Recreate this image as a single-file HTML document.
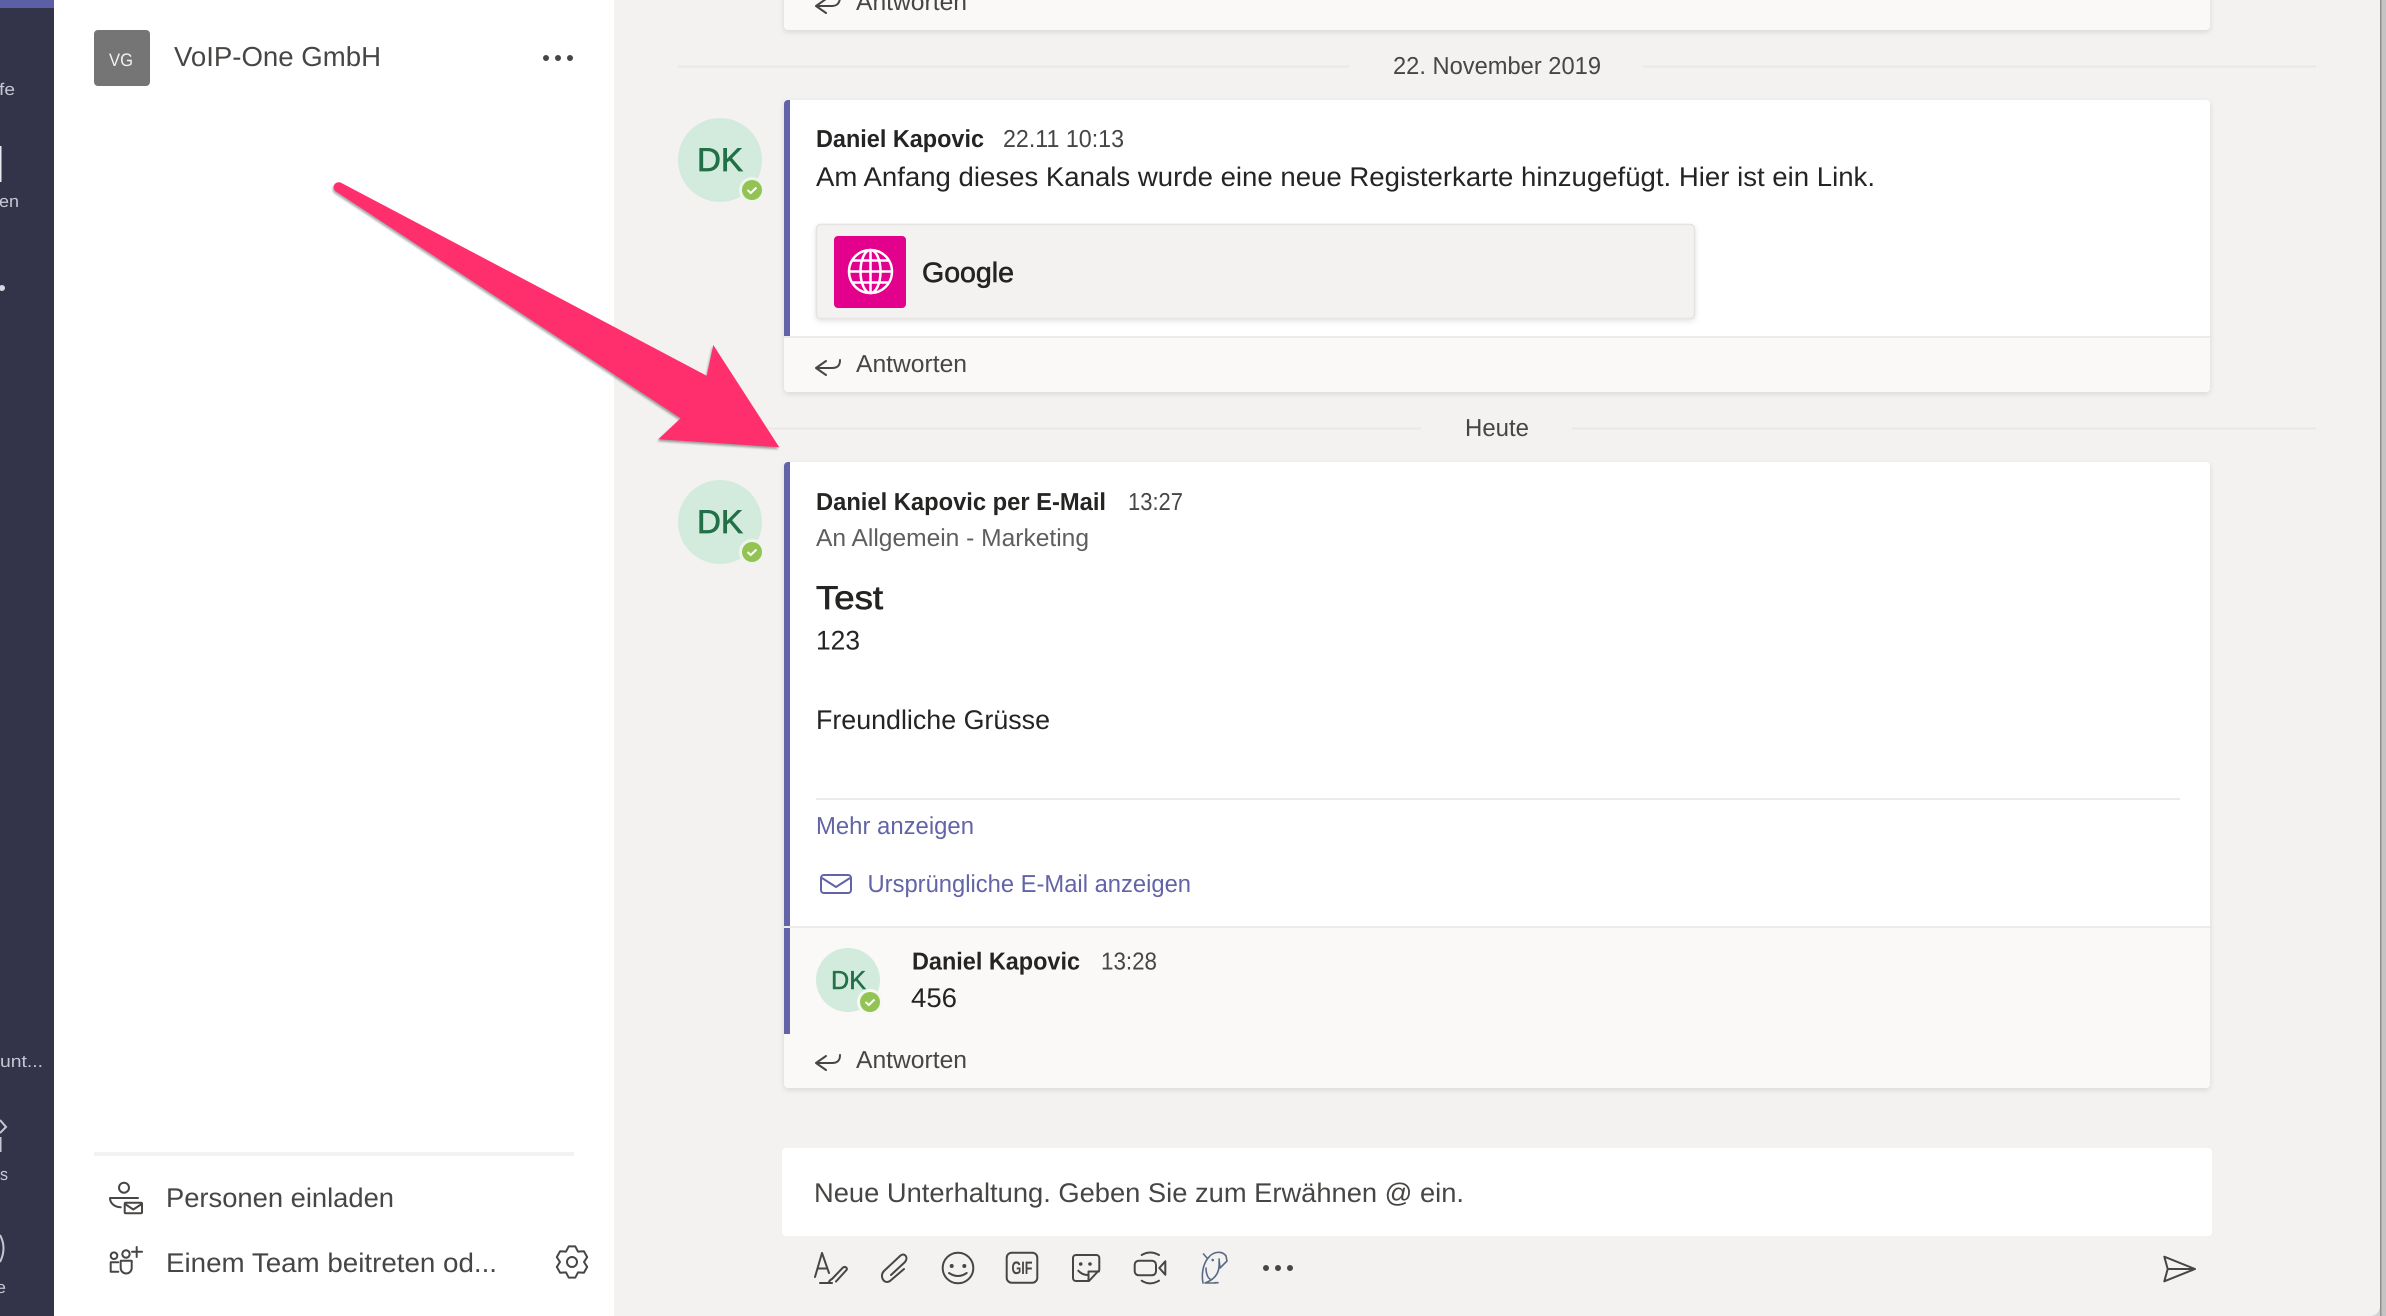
<!DOCTYPE html>
<html lang="de"><head><meta charset="utf-8"><title>VoIP-One GmbH</title>
<style>
html,body{margin:0;padding:0;width:2386px;height:1316px;overflow:hidden;background:#f3f2f1}
svg{display:block}
text{font-family:"Liberation Sans",sans-serif;text-rendering:geometricPrecision}
.t{font-size:24.500px;fill:#252423}
.g{font-size:24.500px;fill:#484644}
.m{font-size:27px;fill:#252423}
.b{font-size:24.500px;font-weight:700;fill:#252423}
.l{font-size:24.500px;fill:#6264a7}
.r{font-size:17px;fill:#c8c6d4}
.dk{font-size:33px;fill:#237048;stroke:#237048;stroke-width:.7px}
.ic{fill:none;stroke:#484644;stroke-width:2;stroke-linecap:round;stroke-linejoin:round}
.sh{filter:drop-shadow(0 2px 3px rgba(0,0,0,.11))}
</style></head><body>
<svg width="2386" height="1316" viewBox="0 0 2386 1316" xmlns="http://www.w3.org/2000/svg">
<rect width="2386" height="1316" fill="#d4d4d4"/>
<rect x="2380" width="1.5" height="1316" fill="#8f8f8f"/>
<rect x="2381.5" width="4.5" height="1316" fill="#c4c4c4"/>
<path d="M0 0H2380V1306a10 10 0 0 1-10 10H0Z" fill="#f3f2f1"/>

<!-- rail -->
<rect x="0" y="0" width="54" height="1316" fill="#33344a"/>
<rect x="0" y="0" width="54" height="8" fill="#5b5fa6"/>
<text class="r" x="-1" y="95" textLength="16" lengthAdjust="spacingAndGlyphs">fe</text>
<rect x="0" y="146" width="1.5" height="36" fill="#e8e8ee"/>
<text class="r" x="-1" y="207" textLength="20" lengthAdjust="spacingAndGlyphs">en</text>
<circle cx="2" cy="288" r="3" fill="#d8d8e0"/>
<text class="r" x="0" y="1067" textLength="43" lengthAdjust="spacingAndGlyphs">unt...</text>
<path d="M0 1120L6 1127L0 1133" fill="none" stroke="#c8c6d4" stroke-width="2"/>
<rect x="0" y="1137" width="1.5" height="15" fill="#c8c6d4"/>
<text class="r" x="0" y="1180" textLength="8" lengthAdjust="spacingAndGlyphs">s</text>
<path d="M0 1235Q7 1248 0 1262" fill="none" stroke="#c8c6d4" stroke-width="2"/>
<text class="r" x="-4" y="1293" textLength="10" lengthAdjust="spacingAndGlyphs">e</text>

<!-- sidebar -->
<rect x="54" y="0" width="560" height="1316" fill="#ffffff"/>
<rect x="94" y="30" width="56" height="56" rx="4" fill="#757575"/>
<text x="121" y="66" text-anchor="middle" font-size="18" fill="#f0f0f0" textLength="24" lengthAdjust="spacingAndGlyphs">VG</text>
<text x="174" y="66" font-size="27.500" fill="#484644" textLength="207" lengthAdjust="spacingAndGlyphs">VoIP-One GmbH</text>
<circle cx="546" cy="58" r="3" fill="#484644"/><circle cx="558" cy="58" r="3" fill="#484644"/><circle cx="570" cy="58" r="3" fill="#484644"/>
<rect x="94" y="1152" width="480" height="4" fill="#f3f2f1"/>
<g class="ic">
<circle cx="124" cy="1187.700" r="5"/>
<path d="M138 1198H110C110 1203 114 1207 120.700 1207.300"/>
<rect x="124.700" y="1202.700" width="17.300" height="10.600" rx="1"/>
<path d="M125 1204L133.300 1209.500L141.700 1204"/>
<circle cx="114" cy="1255.700" r="3.300"/>
<circle cx="126" cy="1254" r="3.700"/>
<path d="M136.700 1247V1257M132 1251.700H142"/>
<path d="M118.300 1262.300H110.700V1271.700H118.300"/>
<path d="M120.700 1260.700H131.700V1268a5.500 5.500 0 0 1-11 0Z"/>
<path d="M575.300 1246.400L568.700 1246.400L566 1251.600L560.100 1251.300L556.800 1257.100L560 1262L556.800 1266.900L560.100 1272.700L566 1272.400L568.700 1277.600L575.300 1277.600L578 1272.400L583.900 1272.700L587.200 1266.900L584 1262L587.200 1257.100L583.900 1251.300L578 1251.600Z"/>
<circle cx="572" cy="1262" r="5"/>
</g>
<text x="166" y="1207" font-size="27" fill="#484644" textLength="228" lengthAdjust="spacingAndGlyphs">Personen einladen</text>
<text x="166" y="1272" font-size="27" fill="#484644" textLength="331" lengthAdjust="spacingAndGlyphs">Einem Team beitreten od...</text>

<!-- top card remnant -->
<path class="sh" d="M784 -10H2210V26a4 4 0 0 1-4 4H788a4 4 0 0 1-4-4Z" fill="#faf9f8"/>
<text class="g" x="856" y="10" textLength="111" lengthAdjust="spacingAndGlyphs">Antworten</text>
<path class="ic" stroke-width="1.800" d="M840 -3C840 3 837 6 832 6H816M826 -1L816 6L826 13"/>

<!-- date 1 -->
<rect x="678" y="65.500" width="672" height="2" fill="#e9e8e6"/>
<rect x="1643" y="65.500" width="673" height="2" fill="#e9e8e6"/>
<text class="g" x="1393" y="74" textLength="208" lengthAdjust="spacingAndGlyphs">22. November 2019</text>

<!-- card 1 -->
<rect class="sh" x="784" y="100" width="1426" height="292" rx="4" fill="#faf9f8"/>
<path d="M790 100H2206a4 4 0 0 1 4 4V336H790Z" fill="#fff"/>
<path d="M790 100H788a4 4 0 0 0-4 4V336H790Z" fill="#6264a7"/>
<rect x="784" y="336" width="1426" height="2" fill="#edebe9"/>
<circle cx="720" cy="160" r="42" fill="#d2ebdd"/>
<text class="dk" x="697" y="171" textLength="46" lengthAdjust="spacingAndGlyphs">DK</text>
<circle cx="752" cy="190" r="13" fill="#eef5ee"/><circle cx="752" cy="190" r="10" fill="#92c353"/>
<path d="M747.500 190L750.800 193L756.500 187.500" fill="none" stroke="#fff" stroke-width="2"/>
<text class="b" x="816" y="147" textLength="168" lengthAdjust="spacingAndGlyphs">Daniel Kapovic</text>
<text class="g" x="1003" y="147" textLength="121" lengthAdjust="spacingAndGlyphs">22.11 10:13</text>
<text class="m" x="816" y="186" textLength="1059" lengthAdjust="spacingAndGlyphs">Am Anfang dieses Kanals wurde eine neue Registerkarte hinzugefügt. Hier ist ein Link.</text>
<rect class="sh" x="816.500" y="224.500" width="878" height="94" rx="4" fill="#f3f2f1" stroke="#e6e4e2" stroke-width="1.500"/>
<rect x="834" y="236" width="72" height="72" rx="4" fill="#e3008c"/>
<g fill="none" stroke="#fff" stroke-width="2.500">
<circle cx="870.500" cy="271.500" r="21.500"/><ellipse cx="870.500" cy="271.500" rx="10" ry="21.500"/>
<path d="M870.500 250V293M849 271.500H892M852 260.500H889M852 282.500H889"/>
</g>
<text x="922" y="282" font-size="28" fill="#252423" stroke="#252423" stroke-width=".6" textLength="92" lengthAdjust="spacingAndGlyphs">Google</text>
<text class="g" x="856" y="372" textLength="111" lengthAdjust="spacingAndGlyphs">Antworten</text>
<path class="ic" stroke-width="1.800" d="M840 360C840 366 837 368 832 368H816M826 361L816 368L826 375"/>

<!-- date 2 -->
<rect x="678" y="427.500" width="743" height="2" fill="#e9e8e6"/>
<rect x="1572" y="427.500" width="744" height="2" fill="#e9e8e6"/>
<text class="g" x="1465" y="436" textLength="64" lengthAdjust="spacingAndGlyphs">Heute</text>

<!-- card 2 -->
<rect class="sh" x="784" y="462" width="1426" height="626" rx="4" fill="#faf9f8"/>
<path d="M790 462H2206a4 4 0 0 1 4 4V926H790Z" fill="#fff"/>
<path d="M790 462H788a4 4 0 0 0-4 4V926H790Z" fill="#6264a7"/>
<rect x="784" y="926" width="1426" height="2" fill="#edebe9"/>
<rect x="784" y="928" width="6" height="106" fill="#6264a7"/>
<circle cx="720" cy="522" r="42" fill="#d2ebdd"/>
<text class="dk" x="697" y="533" textLength="46" lengthAdjust="spacingAndGlyphs">DK</text>
<circle cx="752" cy="552" r="13" fill="#eef5ee"/><circle cx="752" cy="552" r="10" fill="#92c353"/>
<path d="M747.500 552L750.800 555L756.500 549.500" fill="none" stroke="#fff" stroke-width="2"/>
<text class="b" x="816" y="510" textLength="290" lengthAdjust="spacingAndGlyphs">Daniel Kapovic per E-Mail</text>
<text class="g" x="1128" y="510" textLength="55" lengthAdjust="spacingAndGlyphs">13:27</text>
<text class="t" style="fill:#605e5c" x="816" y="546" textLength="273" lengthAdjust="spacingAndGlyphs">An Allgemein - Marketing</text>
<text x="816" y="609" font-size="33" fill="#252423" stroke="#252423" stroke-width=".7" textLength="67" lengthAdjust="spacingAndGlyphs">Test</text>
<text class="m" x="816" y="649.500" textLength="44" lengthAdjust="spacingAndGlyphs">123</text>
<text class="m" x="816" y="729" textLength="234" lengthAdjust="spacingAndGlyphs">Freundliche Grüsse</text>
<rect x="816" y="798" width="1364" height="2" fill="#edebe9"/>
<text class="l" x="816" y="834" textLength="158" lengthAdjust="spacingAndGlyphs">Mehr anzeigen</text>
<g fill="none" stroke="#6264a7" stroke-width="2" stroke-linejoin="round">
<rect x="821" y="875" width="30" height="18" rx="3"/>
<path d="M822 878L836 887L850 878"/>
</g>
<text class="l" x="867.500" y="892" textLength="323.500" lengthAdjust="spacingAndGlyphs">Ursprüngliche E-Mail anzeigen</text>
<!-- reply -->
<circle cx="848" cy="980" r="32" fill="#d2ebdd"/>
<text class="dk" style="font-size:26px;stroke-width:.5px" x="831" y="989" textLength="35" lengthAdjust="spacingAndGlyphs">DK</text>
<circle cx="870" cy="1002" r="13" fill="#f6f8f3"/><circle cx="870" cy="1002" r="10" fill="#92c353"/>
<path d="M865.500 1002L868.800 1005L874.500 999.500" fill="none" stroke="#fff" stroke-width="2"/>
<text class="b" x="912" y="969.500" textLength="168" lengthAdjust="spacingAndGlyphs">Daniel Kapovic</text>
<text class="g" x="1101" y="969.500" textLength="56" lengthAdjust="spacingAndGlyphs">13:28</text>
<text class="m" x="911" y="1007" textLength="46" lengthAdjust="spacingAndGlyphs">456</text>
<text class="g" x="856" y="1068" textLength="111" lengthAdjust="spacingAndGlyphs">Antworten</text>
<path class="ic" stroke-width="1.800" d="M840 1055C840 1061 837 1063 832 1063H816M826 1056L816 1063L826 1070"/>

<!-- composer -->
<rect x="782" y="1148" width="1430" height="88" rx="4" fill="#fff"/>
<text x="814" y="1202" font-size="27" fill="#484644" textLength="650" lengthAdjust="spacingAndGlyphs">Neue Unterhaltung. Geben Sie zum Erwähnen @ ein.</text>
<g class="ic">
<path d="M815 1277L822 1253L829 1273M817.500 1268.500H827"/>
<path d="M820 1283H832M832 1279C829 1280 829 1283 828 1283M832 1279L843 1267.500C845 1266 848 1268 846.500 1270L836 1281.500"/>
<path d="M904 1269L890 1281C884 1285 879 1276 884 1271L900 1256C904 1252 909 1257 905 1262L891 1275"/>
<circle cx="958" cy="1268" r="15.300"/>
<path d="M949 1273Q958 1279 966.700 1273"/>
<rect x="1006.700" y="1252.700" width="30.600" height="30" rx="5"/>
<path d="M1099.300 1270V1258a3 3 0 0 0-3-3H1076a3 3 0 0 0-3 3V1278a3 3 0 0 0 3 3H1089ZM1088.500 1281V1271.500H1099"/>
<path d="M1078.300 1270.700Q1082 1275 1088 1275"/>
<rect x="1134.700" y="1260.700" width="21.300" height="14.600" rx="4"/>
<path d="M1159.300 1268L1165.300 1261.300V1274.700Z"/>
<path d="M1141.700 1255Q1150 1250 1159 1255M1141.700 1280.700Q1150 1286 1159 1280.700"/>
</g>
<circle cx="951.700" cy="1266" r="2" fill="#484644"/><circle cx="964.300" cy="1266" r="2" fill="#484644"/>
<text x="1011.500" y="1274" font-size="18" font-weight="700" fill="#484644" textLength="21" lengthAdjust="spacingAndGlyphs">GIF</text>
<circle cx="1080.700" cy="1264" r="1.800" fill="#484644"/><circle cx="1090" cy="1264" r="1.800" fill="#484644"/>
<g fill="none" stroke="#5a6a85" stroke-width="1.600" stroke-linejoin="round" stroke-linecap="round">
<path d="M1203 1283C1201 1272 1204 1262 1209 1257C1213 1252 1222 1250 1226 1256L1227 1261L1220 1268L1219 1259"/>
<path d="M1219 1262C1220 1272 1216 1279 1205 1283H1216"/>
<path d="M1206 1268C1206 1274 1208 1278 1210 1279M1203.500 1254L1207 1258M1215 1282.700H1218"/>
</g>
<circle cx="1212.700" cy="1260" r="1.300" fill="#5a6a85"/>
<circle cx="1266" cy="1268" r="3" fill="#484644"/><circle cx="1278" cy="1268" r="3" fill="#484644"/><circle cx="1290" cy="1268" r="3" fill="#484644"/>
<path class="ic" d="M2167.700 1269L2164.300 1256.700L2195 1269L2164.300 1281.300ZM2167.700 1269H2195"/>

<!-- arrow -->
<path style="filter:drop-shadow(-1px 2px 1px rgba(0,0,0,.35))" d="M341.500 183L706.700 375.700L713.300 345L779.300 447.300L658.300 439.300L680.700 418.300L336 191.500C330.500 187.500 335.500 180 341.500 183Z" fill="#ff2f6e"/>
</svg>
</body></html>
